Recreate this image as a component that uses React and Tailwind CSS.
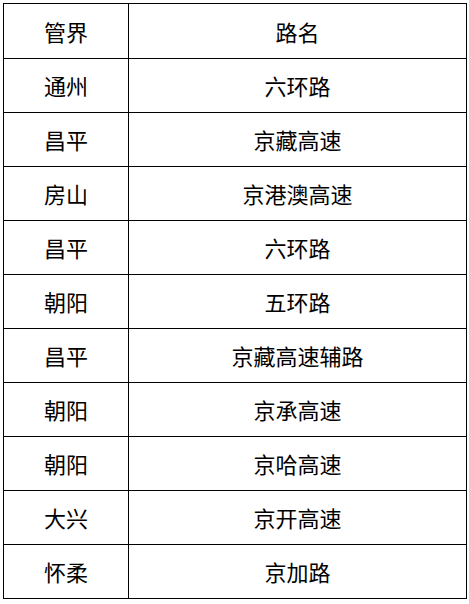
import React from 'react';

const rows = [
  ['通州', '六环路'],
  ['昌平', '京藏高速'],
  ['房山', '京港澳高速'],
  ['昌平', '六环路'],
  ['朝阳', '五环路'],
  ['昌平', '京藏高速辅路'],
  ['朝阳', '京承高速'],
  ['朝阳', '京哈高速'],
  ['大兴', '京开高速'],
  ['怀柔', '京加路'],
];

export default function App() {
  return (
    <div className="bg-white w-[469px] h-[604px] pt-[3px] pl-[3px]" style={{ fontFamily: '"Noto Sans CJK SC", "Noto Sans", sans-serif' }}>
      <table className="border-collapse w-[464px] text-[22px] text-black table-fixed">
        <colgroup>
          <col className="w-[125px]" />
          <col />
        </colgroup>
        <tbody>
          <tr className="h-[55px]">
            <td className="border border-black text-center align-middle">管界</td>
            <td className="border border-black text-center align-middle">路名</td>
          </tr>
          {rows.map((r, i) => (
            <tr key={i} className="h-[54px]">
              <td className="border border-black text-center align-middle">{r[0]}</td>
              <td className="border border-black text-center align-middle">{r[1]}</td>
            </tr>
          ))}
        </tbody>
      </table>
    </div>
  );
}
